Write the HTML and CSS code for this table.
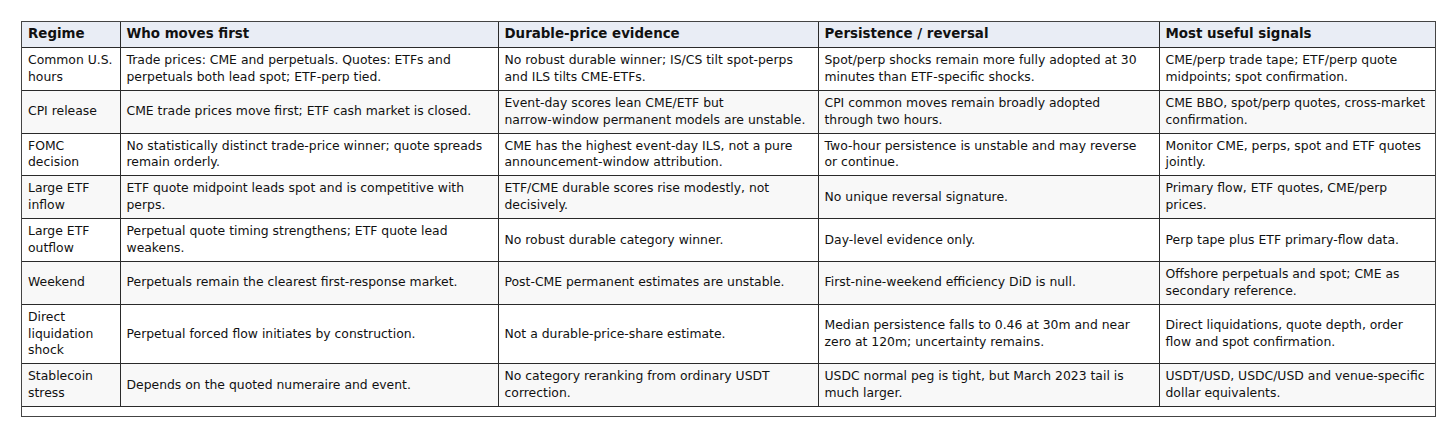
FILE: index.html
```html
<!DOCTYPE html>
<html lang="en">
<head>
<meta charset="utf-8">
<title>Regime table</title>
<link rel="stylesheet" href="styles.css">
</head>
<body>
<div class="wrap">
<table class="grid">
<colgroup>
<col class="c1"><col class="c2"><col class="c3"><col class="c4"><col class="c5">
</colgroup>
<thead>
<tr><th>Regime</th><th>Who moves first</th><th>Durable-price evidence</th><th>Persistence / reversal</th><th>Most useful signals</th></tr>
</thead>
<tbody>
<tr><td>Common U.S. hours</td><td>Trade prices: CME and perpetuals. Quotes: ETFs and perpetuals both lead spot; ETF-perp tied.</td><td>No robust durable winner; IS/CS tilt spot-perps and ILS tilts CME-ETFs.</td><td>Spot/perp shocks remain more fully adopted at 30 minutes than ETF-specific shocks.</td><td>CME/perp trade tape; ETF/perp quote midpoints; spot confirmation.</td></tr>
<tr><td>CPI release</td><td>CME trade prices move first; ETF cash market is closed.</td><td>Event-day scores lean CME/ETF but <span class="nw">narrow-window</span> permanent models are unstable.</td><td>CPI common moves remain broadly adopted through two hours.</td><td>CME BBO, spot/perp quotes, cross-market confirmation.</td></tr>
<tr><td>FOMC decision</td><td>No statistically distinct trade-price winner; quote spreads remain orderly.</td><td>CME has the highest event-day ILS, not a pure announcement-window attribution.</td><td>Two-hour persistence is unstable and may reverse or continue.</td><td>Monitor CME, perps, spot and ETF quotes jointly.</td></tr>
<tr><td>Large ETF inflow</td><td>ETF quote midpoint leads spot and is competitive with perps.</td><td>ETF/CME durable scores rise modestly, not decisively.</td><td>No unique reversal signature.</td><td>Primary flow, ETF quotes, CME/perp prices.</td></tr>
<tr><td>Large ETF outflow</td><td>Perpetual quote timing strengthens; ETF quote lead weakens.</td><td>No robust durable category winner.</td><td>Day-level evidence only.</td><td>Perp tape plus ETF primary-flow data.</td></tr>
<tr><td>Weekend</td><td>Perpetuals remain the clearest first-response market.</td><td>Post-CME permanent estimates are unstable.</td><td>First-nine-weekend efficiency DiD is null.</td><td>Offshore perpetuals and spot; CME as secondary reference.</td></tr>
<tr><td>Direct liquidation shock</td><td>Perpetual forced flow initiates by construction.</td><td>Not a durable-price-share estimate.</td><td>Median persistence falls to 0.46 at 30m and near zero at 120m; uncertainty remains.</td><td>Direct liquidations, quote depth, order flow and spot confirmation.</td></tr>
<tr><td>Stablecoin stress</td><td>Depends on the quoted numeraire and event.</td><td>No category reranking from ordinary USDT correction.</td><td>USDC normal peg is tight, but March 2023 tail is much larger.</td><td>USDT/USD, USDC/USD and venue-specific dollar equivalents.</td></tr>
</tbody>
</table>
</div>
</body>
</html>
```
FILE: styles.css
```css
html, body {
  margin: 0;
  padding: 0;
  background: #ffffff;
}
body {
  padding: 21px 20px 0 21px;
  font-family: "DejaVu Sans", Verdana, sans-serif;
  color: #111111;
}
.wrap {
  width: 1413px;
  border: 1px solid #444444;
  padding-bottom: 9px;
}
.grid {
  width: 100%;
  border-collapse: collapse;
  table-layout: fixed;
}
.c1 { width: 98px; }
.c2 { width: 378px; }
.c3 { width: 320px; }
.c4 { width: 341px; }
.c5 { width: auto; }
.grid th,
.grid td {
  border: 1px solid #2a2a2a;
  padding: 4.1px 6px 4.1px 6px;
  text-align: left;
  vertical-align: middle;
  line-height: 16.8px;
}
.grid th {
  font-size: 13.4px;
  font-weight: bold;
  background: #e9edf5;
  color: #111111;
}
.grid td {
  font-size: 12.4px;
}
.nw { white-space: nowrap; }
.grid tr:first-child th { border-top: none; }
.grid tr th:first-child,
.grid tr td:first-child { border-left: none; }
.grid tr th:last-child,
.grid tr td:last-child { border-right: none; }
.grid tbody tr:nth-child(even) td {
  background: #f8f8f8;
}
```
